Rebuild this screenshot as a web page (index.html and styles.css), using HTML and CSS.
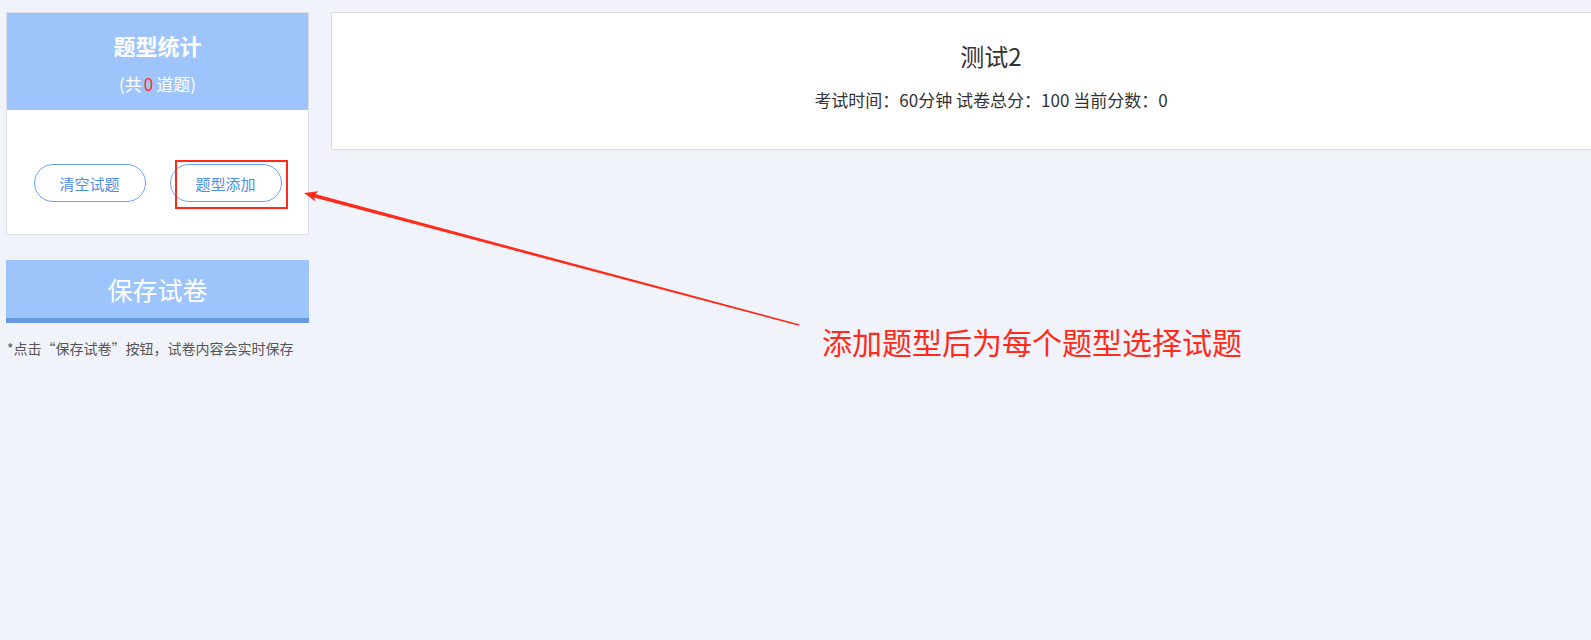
FILE: index.html
```html
<!DOCTYPE html>
<html lang="zh-CN">
<head>
    <meta charset="UTF-8">
    <meta name="viewport" content="width=device-width, initial-scale=1.0">
    <title>试卷编辑</title>
    <link rel="stylesheet" href="styles.css">
</head>
<body>
    <div class="page">
        <div class="sidebar">
            <div class="stat-card">
                <div class="stat-header">
                    <div class="stat-title">题型统计</div>
                    <div class="stat-count">(共<span class="num">0</span>道题)</div>
                </div>
                <div class="stat-actions">
                    <button class="pill-btn">清空试题</button>
                    <button class="pill-btn">题型添加</button>
                </div>
            </div>
            <button class="save-btn">保存试卷</button>
            <p class="save-note">*点击“保存试卷”按钮，试卷内容会实时保存</p>
        </div>
        <div class="content">
            <div class="paper-card">
                <h2 class="paper-title">测试2</h2>
                <div class="paper-info">考试时间：60分钟 试卷总分：100 当前分数：0</div>
            </div>
        </div>

        <!-- annotation overlay -->
        <div class="mark-box"></div>
        <svg class="mark-arrow" width="1591" height="640" viewBox="0 0 1591 640">
            <polygon fill="#ff2a1a" points="304,193 318.5,191.2 315.1,194.1 799.2,324.3 798.8,325.8 314.1,197.5 315.6,201.6"/>
        </svg>
        <div class="mark-text">添加题型后为每个题型选择试题</div>
    </div>
</body>
</html>
```

FILE: styles.css
```css
html, body {
    margin: 0;
    padding: 0;
    overflow: hidden;
}
body {
    font-family: "Noto Sans CJK SC", "Liberation Sans", sans-serif;
    background-color: #f0f3fa;
    color: #333;
    width: 1591px;
    height: 640px;
}
.page {
    position: relative;
    display: flex;
    align-items: flex-start;
    gap: 22px;
    padding: 12px 0 0 6px;
    height: 628px;
}
.sidebar {
    width: 303px;
    flex-shrink: 0;
}
.stat-card {
    background-color: #fff;
    border: 1px solid #dcdfe6;
}
.stat-header {
    background-color: #9ec5fb;
    color: #fff;
    text-align: center;
    height: 97px;
    box-sizing: border-box;
    padding-top: 18px;
}
.stat-title {
    font-size: 22px;
    font-weight: bold;
    line-height: 28px;
}
.stat-count {
    font-size: 17px;
    line-height: 24px;
    margin-top: 13px;
}
.stat-count .num {
    color: #ff2a1a;
    margin: 0 3px 0 2px;
}
.stat-actions {
    display: flex;
    justify-content: center;
    gap: 24px;
    padding: 54px 0 32px;
}
.pill-btn {
    width: 112px;
    height: 38px;
    border: 1px solid #6aa3f5;
    border-radius: 19px;
    background-color: #fff;
    color: #4d8ee8;
    font-family: inherit;
    font-size: 15px;
    cursor: pointer;
}
.save-btn {
    display: block;
    width: 303px;
    height: 63px;
    margin-top: 25px;
    border: none;
    border-bottom: 5px solid #6699e0;
    background-color: #9ec5fb;
    color: #fff;
    font-family: inherit;
    font-size: 25px;
    cursor: pointer;
}
.save-note {
    margin: 15px 0 0 1px;
    font-size: 14px;
    line-height: 20px;
    color: #555;
}
.content {
    flex-shrink: 0;
}
.paper-card {
    width: 1320px;
    height: 138px;
    box-sizing: border-box;
    background-color: #fff;
    border: 1px solid #d9dce5;
    text-align: center;
    padding-top: 27px;
}
.paper-title {
    margin: 0;
    font-size: 24px;
    font-weight: normal;
    line-height: 32px;
}
.paper-info {
    margin-top: 17px;
    font-size: 17px;
    line-height: 22px;
}
.mark-box {
    position: absolute;
    left: 175px;
    top: 160px;
    width: 109px;
    height: 45px;
    border: 2px solid #ff2a1a;
}
.mark-arrow {
    position: absolute;
    left: 0;
    top: 0;
    pointer-events: none;
}
.mark-text {
    position: absolute;
    left: 822px;
    top: 324px;
    font-size: 30px;
    line-height: 34px;
    color: #ff2a1a;
    white-space: nowrap;
}
```
